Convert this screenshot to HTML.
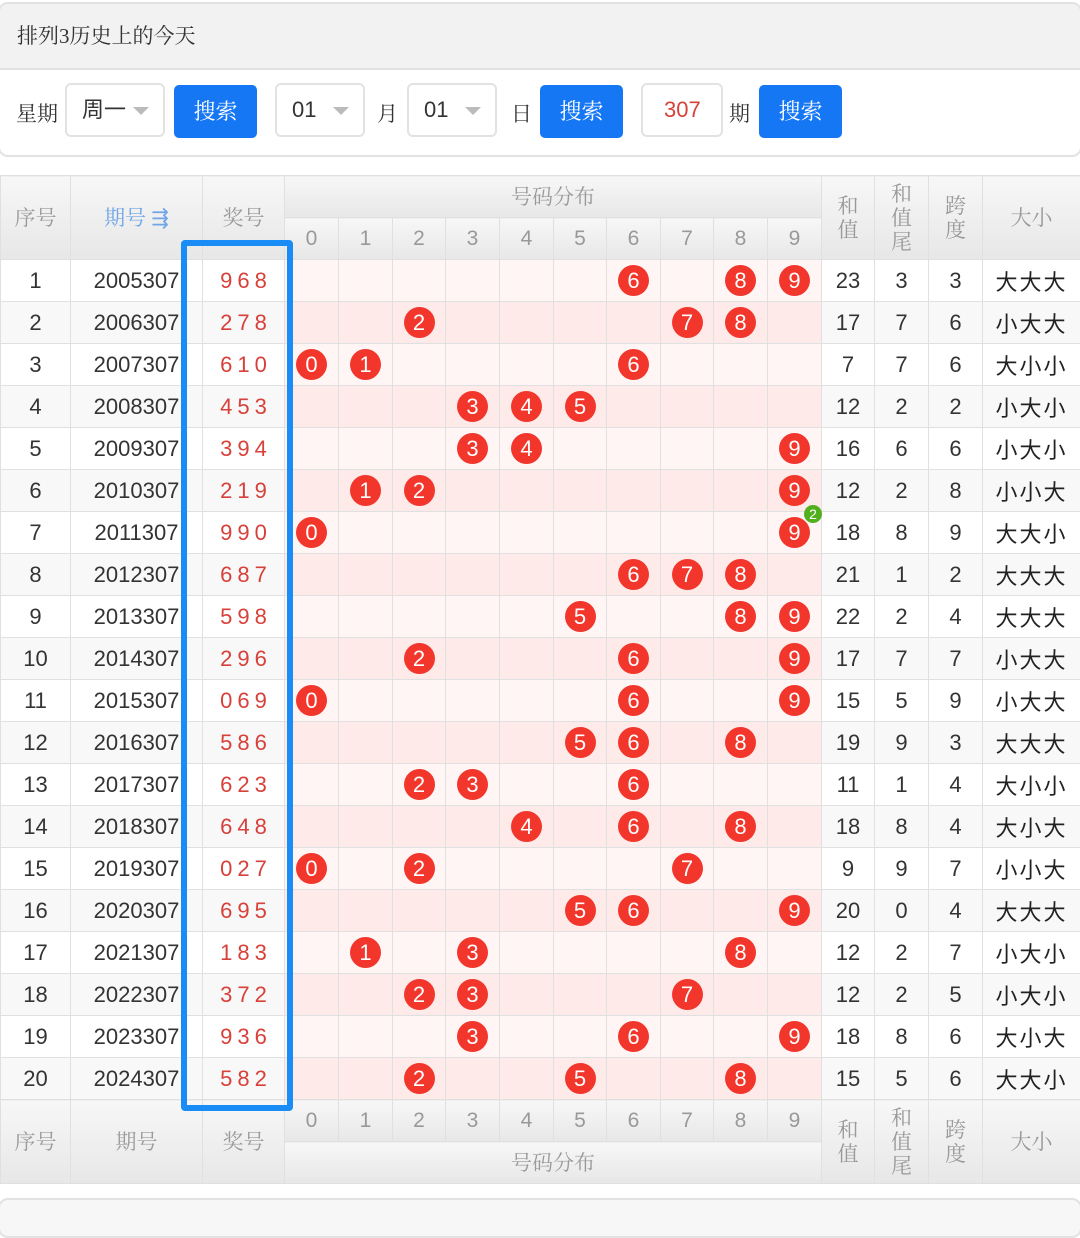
<!DOCTYPE html>
<html><head><meta charset="utf-8"><style>
*{box-sizing:border-box;margin:0;padding:0}
body{width:1080px;height:1216px;background:#fff;font-family:"Liberation Sans","Noto Sans CJK SC",sans-serif;position:relative;overflow:hidden;color:#333}
.top{position:absolute;left:-2px;top:2px;width:1084px;height:155px;border:2px solid #e2e2e2;border-radius:10px;overflow:hidden}
.tt{height:66px;background:#f2f2f2;border-bottom:2px solid #e2e2e2;font-size:21px;line-height:64px;padding-left:17px;color:#333;font-family:"Liberation Serif","Noto Serif CJK SC",serif}
.ab{position:absolute;font-size:21px;font-family:"Liberation Serif","Noto Serif CJK SC",serif;color:#333}
.sel{position:absolute;top:83px;height:54px;border:2px solid #e2e2e2;border-radius:6px;background:#fff;font-size:22px;line-height:50px;padding-left:15px;color:#333}
.sel:after{content:"";position:absolute;right:14px;top:22px;border-left:8px solid transparent;border-right:8px solid transparent;border-top:8px solid #bbb}
.btn{position:absolute;top:85px;height:53px;background:#1677f5;border-radius:5px;color:#fff;font-size:22px;line-height:53px;text-align:center;font-family:"Liberation Serif","Noto Serif CJK SC",serif}
table{position:absolute;left:0;top:175px;width:1080px;border-collapse:collapse;table-layout:fixed}
td,th{border:1px solid #e0e0e0;text-align:center;font-weight:normal}
th{background:linear-gradient(#f7f7f7,#e7e7e7);color:#999;font-size:21px;font-family:"Liberation Serif","Noto Serif CJK SC",serif;line-height:24px}
th.d{font-family:"Liberation Sans",sans-serif;height:42px}
td{height:42px;font-size:22px;color:#333;padding:0}
tbody tr:nth-child(odd) td{background:#fff}
tbody tr:nth-child(even) td{background:#f8f8f8}
tbody tr:nth-child(odd) td.p{background:#fff5f5}
tbody tr:nth-child(even) td.p{background:#ffeaea}
td.r{color:#d8403a;letter-spacing:5px;text-indent:5px}
td.z{font-family:"Liberation Sans","Noto Sans CJK SC",sans-serif;letter-spacing:2px;color:#222}
.b{display:inline-block;width:31px;height:31px;border-radius:50%;background:#f2362b;color:#fff;font-size:22px;line-height:31px;vertical-align:middle;position:relative}
.g{position:absolute;right:-12px;top:-12px;width:18px;height:18px;border-radius:50%;background:#52b01d;color:#fff;font-size:14px;line-height:18px}
.hl{position:absolute;left:181px;top:240px;width:112px;height:871px;border:6px solid #1a8cf5;border-radius:4px}
.bot{position:absolute;left:-2px;top:1198px;width:1084px;height:40px;border:2px solid #e2e2e2;border-radius:10px;background:#f7f7f7}
</style></head><body>
<div class="top"><div class="tt">排列3历史上的今天</div></div>
<div class="ab" style="left:16px;top:98px">星期</div>
<div class="sel" style="left:65px;width:100px">周一</div>
<div class="btn" style="left:174px;width:83px">搜索</div>
<div class="sel" style="left:275px;width:90px;font-family:'Liberation Sans'">01</div>
<div class="ab" style="left:377px;top:98px">月</div>
<div class="sel" style="left:407px;width:90px;font-family:'Liberation Sans'">01</div>
<div class="ab" style="left:511px;top:98px">日</div>
<div class="btn" style="left:540px;width:83px">搜索</div>
<div class="sel" style="left:641px;width:82px;color:#d8403a;padding-left:21px">307</div>
<style>.sel:nth-of-type(0){}</style>
<div class="ab" style="left:729px;top:98px">期</div>
<div class="btn" style="left:759px;width:83px">搜索</div>
<style>div.sel[style*="641px"]:after{display:none}</style>
<table>
<colgroup><col style="width:70px"><col style="width:132px"><col style="width:82px"><col style="width:54px"><col style="width:54px"><col style="width:53px"><col style="width:54px"><col style="width:54px"><col style="width:53px"><col style="width:54px"><col style="width:53px"><col style="width:54px"><col style="width:54px"><col style="width:53px"><col style="width:54px"><col style="width:54px"><col style="width:98px"></colgroup>
<thead>
<tr><th rowspan="2">序号</th><th rowspan="2" style="color:#6fa6e8">期号 ⇶</th><th rowspan="2">奖号</th><th colspan="10" style="height:42px">号码分布</th><th rowspan="2">和<br>值</th><th rowspan="2">和<br>值<br>尾</th><th rowspan="2">跨<br>度</th><th rowspan="2">大小</th></tr>
<tr><th class="d">0</th><th class="d">1</th><th class="d">2</th><th class="d">3</th><th class="d">4</th><th class="d">5</th><th class="d">6</th><th class="d">7</th><th class="d">8</th><th class="d">9</th></tr>
</thead>
<tbody>
<tr><td>1</td><td>2005307</td><td class="r">968</td><td class="p"></td><td class="p"></td><td class="p"></td><td class="p"></td><td class="p"></td><td class="p"></td><td class="p"><span class="b">6</span></td><td class="p"></td><td class="p"><span class="b">8</span></td><td class="p"><span class="b">9</span></td><td>23</td><td>3</td><td>3</td><td class="z">大大大</td></tr>
<tr><td>2</td><td>2006307</td><td class="r">278</td><td class="p"></td><td class="p"></td><td class="p"><span class="b">2</span></td><td class="p"></td><td class="p"></td><td class="p"></td><td class="p"></td><td class="p"><span class="b">7</span></td><td class="p"><span class="b">8</span></td><td class="p"></td><td>17</td><td>7</td><td>6</td><td class="z">小大大</td></tr>
<tr><td>3</td><td>2007307</td><td class="r">610</td><td class="p"><span class="b">0</span></td><td class="p"><span class="b">1</span></td><td class="p"></td><td class="p"></td><td class="p"></td><td class="p"></td><td class="p"><span class="b">6</span></td><td class="p"></td><td class="p"></td><td class="p"></td><td>7</td><td>7</td><td>6</td><td class="z">大小小</td></tr>
<tr><td>4</td><td>2008307</td><td class="r">453</td><td class="p"></td><td class="p"></td><td class="p"></td><td class="p"><span class="b">3</span></td><td class="p"><span class="b">4</span></td><td class="p"><span class="b">5</span></td><td class="p"></td><td class="p"></td><td class="p"></td><td class="p"></td><td>12</td><td>2</td><td>2</td><td class="z">小大小</td></tr>
<tr><td>5</td><td>2009307</td><td class="r">394</td><td class="p"></td><td class="p"></td><td class="p"></td><td class="p"><span class="b">3</span></td><td class="p"><span class="b">4</span></td><td class="p"></td><td class="p"></td><td class="p"></td><td class="p"></td><td class="p"><span class="b">9</span></td><td>16</td><td>6</td><td>6</td><td class="z">小大小</td></tr>
<tr><td>6</td><td>2010307</td><td class="r">219</td><td class="p"></td><td class="p"><span class="b">1</span></td><td class="p"><span class="b">2</span></td><td class="p"></td><td class="p"></td><td class="p"></td><td class="p"></td><td class="p"></td><td class="p"></td><td class="p"><span class="b">9</span></td><td>12</td><td>2</td><td>8</td><td class="z">小小大</td></tr>
<tr><td>7</td><td>2011307</td><td class="r">990</td><td class="p"><span class="b">0</span></td><td class="p"></td><td class="p"></td><td class="p"></td><td class="p"></td><td class="p"></td><td class="p"></td><td class="p"></td><td class="p"></td><td class="p"><span class="b">9<span class="g">2</span></span></td><td>18</td><td>8</td><td>9</td><td class="z">大大小</td></tr>
<tr><td>8</td><td>2012307</td><td class="r">687</td><td class="p"></td><td class="p"></td><td class="p"></td><td class="p"></td><td class="p"></td><td class="p"></td><td class="p"><span class="b">6</span></td><td class="p"><span class="b">7</span></td><td class="p"><span class="b">8</span></td><td class="p"></td><td>21</td><td>1</td><td>2</td><td class="z">大大大</td></tr>
<tr><td>9</td><td>2013307</td><td class="r">598</td><td class="p"></td><td class="p"></td><td class="p"></td><td class="p"></td><td class="p"></td><td class="p"><span class="b">5</span></td><td class="p"></td><td class="p"></td><td class="p"><span class="b">8</span></td><td class="p"><span class="b">9</span></td><td>22</td><td>2</td><td>4</td><td class="z">大大大</td></tr>
<tr><td>10</td><td>2014307</td><td class="r">296</td><td class="p"></td><td class="p"></td><td class="p"><span class="b">2</span></td><td class="p"></td><td class="p"></td><td class="p"></td><td class="p"><span class="b">6</span></td><td class="p"></td><td class="p"></td><td class="p"><span class="b">9</span></td><td>17</td><td>7</td><td>7</td><td class="z">小大大</td></tr>
<tr><td>11</td><td>2015307</td><td class="r">069</td><td class="p"><span class="b">0</span></td><td class="p"></td><td class="p"></td><td class="p"></td><td class="p"></td><td class="p"></td><td class="p"><span class="b">6</span></td><td class="p"></td><td class="p"></td><td class="p"><span class="b">9</span></td><td>15</td><td>5</td><td>9</td><td class="z">小大大</td></tr>
<tr><td>12</td><td>2016307</td><td class="r">586</td><td class="p"></td><td class="p"></td><td class="p"></td><td class="p"></td><td class="p"></td><td class="p"><span class="b">5</span></td><td class="p"><span class="b">6</span></td><td class="p"></td><td class="p"><span class="b">8</span></td><td class="p"></td><td>19</td><td>9</td><td>3</td><td class="z">大大大</td></tr>
<tr><td>13</td><td>2017307</td><td class="r">623</td><td class="p"></td><td class="p"></td><td class="p"><span class="b">2</span></td><td class="p"><span class="b">3</span></td><td class="p"></td><td class="p"></td><td class="p"><span class="b">6</span></td><td class="p"></td><td class="p"></td><td class="p"></td><td>11</td><td>1</td><td>4</td><td class="z">大小小</td></tr>
<tr><td>14</td><td>2018307</td><td class="r">648</td><td class="p"></td><td class="p"></td><td class="p"></td><td class="p"></td><td class="p"><span class="b">4</span></td><td class="p"></td><td class="p"><span class="b">6</span></td><td class="p"></td><td class="p"><span class="b">8</span></td><td class="p"></td><td>18</td><td>8</td><td>4</td><td class="z">大小大</td></tr>
<tr><td>15</td><td>2019307</td><td class="r">027</td><td class="p"><span class="b">0</span></td><td class="p"></td><td class="p"><span class="b">2</span></td><td class="p"></td><td class="p"></td><td class="p"></td><td class="p"></td><td class="p"><span class="b">7</span></td><td class="p"></td><td class="p"></td><td>9</td><td>9</td><td>7</td><td class="z">小小大</td></tr>
<tr><td>16</td><td>2020307</td><td class="r">695</td><td class="p"></td><td class="p"></td><td class="p"></td><td class="p"></td><td class="p"></td><td class="p"><span class="b">5</span></td><td class="p"><span class="b">6</span></td><td class="p"></td><td class="p"></td><td class="p"><span class="b">9</span></td><td>20</td><td>0</td><td>4</td><td class="z">大大大</td></tr>
<tr><td>17</td><td>2021307</td><td class="r">183</td><td class="p"></td><td class="p"><span class="b">1</span></td><td class="p"></td><td class="p"><span class="b">3</span></td><td class="p"></td><td class="p"></td><td class="p"></td><td class="p"></td><td class="p"><span class="b">8</span></td><td class="p"></td><td>12</td><td>2</td><td>7</td><td class="z">小大小</td></tr>
<tr><td>18</td><td>2022307</td><td class="r">372</td><td class="p"></td><td class="p"></td><td class="p"><span class="b">2</span></td><td class="p"><span class="b">3</span></td><td class="p"></td><td class="p"></td><td class="p"></td><td class="p"><span class="b">7</span></td><td class="p"></td><td class="p"></td><td>12</td><td>2</td><td>5</td><td class="z">小大小</td></tr>
<tr><td>19</td><td>2023307</td><td class="r">936</td><td class="p"></td><td class="p"></td><td class="p"></td><td class="p"><span class="b">3</span></td><td class="p"></td><td class="p"></td><td class="p"><span class="b">6</span></td><td class="p"></td><td class="p"></td><td class="p"><span class="b">9</span></td><td>18</td><td>8</td><td>6</td><td class="z">大小大</td></tr>
<tr><td>20</td><td>2024307</td><td class="r">582</td><td class="p"></td><td class="p"></td><td class="p"><span class="b">2</span></td><td class="p"></td><td class="p"></td><td class="p"><span class="b">5</span></td><td class="p"></td><td class="p"></td><td class="p"><span class="b">8</span></td><td class="p"></td><td>15</td><td>5</td><td>6</td><td class="z">大大小</td></tr>
</tbody>
<tfoot>
<tr><th rowspan="2">序号</th><th rowspan="2">期号</th><th rowspan="2">奖号</th><th class="d">0</th><th class="d">1</th><th class="d">2</th><th class="d">3</th><th class="d">4</th><th class="d">5</th><th class="d">6</th><th class="d">7</th><th class="d">8</th><th class="d">9</th><th rowspan="2">和<br>值</th><th rowspan="2">和<br>值<br>尾</th><th rowspan="2">跨<br>度</th><th rowspan="2">大小</th></tr>
<tr><th colspan="10" style="height:42px">号码分布</th></tr>
</tfoot>
</table>
<div class="hl"></div>
<div class="bot"></div>
</body></html>
